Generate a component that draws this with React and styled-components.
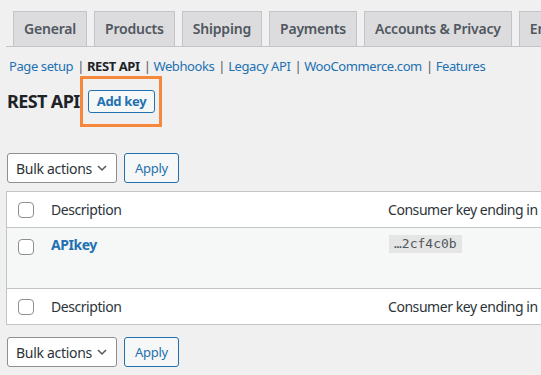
import React from 'react';
import styled, { createGlobalStyle } from 'styled-components';

const GlobalStyle = createGlobalStyle`
  html, body {
    margin: 0;
    padding: 0;
    overflow: hidden;
    background: #f0f0f1;
    font-family: "Noto Sans", "Open Sans", sans-serif;
    color: #3c434a;
  }
`;

const Page = styled.div`
  padding: 11px 0 0 6px;
  width: 760px;
`;

const TabBar = styled.nav`
  display: flex;
  border-bottom: 1px solid #c3c4c7;
  height: 35px;
`;

const Tab = styled.a`
  display: block;
  margin-left: 7px;
  padding: 5px 10px;
  height: 24px;
  line-height: 24px;
  font-size: 14px;
  font-weight: 600;
  color: #50575e;
  background: #dcdcde;
  border: 1px solid #c3c4c7;
  border-bottom: none;
  white-space: nowrap;
  letter-spacing: -0.2px;
`;

const SubNav = styled.ul`
  display: flex;
  list-style: none;
  margin: 11px 0 0 3px;
  padding: 0;
  font-size: 13px;
  line-height: 17px;
  letter-spacing: -0.4px;
`;

const SubItem = styled.li`
  white-space: nowrap;
  & + &::before {
    content: "|";
    color: #50575e;
    margin: 0 3px 0 4px;
  }
`;

const SubLink = styled.a`
  color: ${p => (p.$current ? '#1d2327' : '#2271b1')};
  font-weight: ${p => (p.$current ? 700 : 400)};
  text-decoration: none;
`;

const TitleRow = styled.div`
  display: flex;
  align-items: center;
  margin-top: 1px;
  height: 50px;
`;

const Title = styled.h2`
  margin: 0 0 0 1px;
  font-size: 18px;
  font-weight: 700;
  color: #1d2327;
  letter-spacing: -0.6px;
`;

const Highlight = styled.span`
  display: inline-flex;
  padding: 11px 4px 11px 5px;
  border: 3px solid #f6883c;
`;

const Button = styled.button`
  height: ${p => (p.$small ? '23px' : '30px')};
  padding: 0 ${p => (p.$small ? '8px' : '10px')};
  font-family: inherit;
  font-size: 13px;
  font-weight: ${p => (p.$small ? 700 : 400)};
  color: #2271b1;
  background: #f6f7f7;
  border: 1px solid #2271b1;
  border-radius: 3px;
  letter-spacing: -0.3px;
`;

const Toolbar = styled.div`
  display: flex;
  gap: 7px;
  margin: ${p => (p.$top ? '27px 0 8px 1px' : '12px 0 0 1px')};
`;

const Select = styled.div`
  display: flex;
  align-items: center;
  justify-content: space-between;
  box-sizing: border-box;
  width: 110px;
  height: 30px;
  padding: 0 8px;
  font-size: 14px;
  color: #2c3338;
  background: #fff;
  border: 1px solid #8c8f94;
  border-radius: 3px;
  letter-spacing: -0.3px;
`;

const Table = styled.div`
  width: 700px;
  border: 1px solid #c3c4c7;
  background: #fff;
`;

const Row = styled.div`
  display: grid;
  grid-template-columns: 44px 337px 1fr;
  height: ${p => (p.$tall ? '60px' : '35px')};
  background: ${p => (p.$alt ? '#f6f7f7' : '#fff')};
  border-top: ${p => (p.$line ? '1px solid #c3c4c7' : 'none')};
  font-size: 14px;
  letter-spacing: -0.45px;
`;

const Cell = styled.div`
  display: flex;
  align-items: ${p => (p.$top ? 'flex-start' : 'center')};
  padding-top: ${p => (p.$top ? '7px' : '0')};
  color: #2c3338;
  white-space: nowrap;
`;

const Check = styled.span`
  box-sizing: border-box;
  width: 16px;
  height: 16px;
  margin-left: 11px;
  margin-top: ${p => (p.$top ? '4px' : '0')};
  background: #fff;
  border: 1px solid #8c8f94;
  border-radius: 4px;
`;

const KeyLink = styled.a`
  color: #2271b1;
  font-weight: 700;
  font-size: 14px;
  line-height: 19px;
`;

const Code = styled.code`
  margin-left: 1px;
  padding: 1px 5px;
  font-family: "DejaVu Sans Mono", monospace;
  font-size: 13px;
  line-height: 16px;
  color: #50575e;
  background: #e5e5e5;
  letter-spacing: 0;
`;

const Chevron = () => (
  <svg width="12" height="12" viewBox="0 0 12 12">
    <path d="M2 4l4 4 4-4" fill="none" stroke="#50575e" strokeWidth="1.5" />
  </svg>
);

const tabs = ['General', 'Products', 'Shipping', 'Payments', 'Accounts & Privacy', 'Emails'];
const sections = ['Page setup', 'REST API', 'Webhooks', 'Legacy API', 'WooCommerce.com', 'Features'];

const Actions = ({ top }) => (
  <Toolbar $top={top}>
    <Select>Bulk actions <Chevron /></Select>
    <Button>Apply</Button>
  </Toolbar>
);

const HeadRow = ({ line }) => (
  <Row $line={line}>
    <Cell><Check /></Cell>
    <Cell>Description</Cell>
    <Cell>Consumer key ending in</Cell>
  </Row>
);

export default function App() {
  return (
    <Page>
      <GlobalStyle />
      <TabBar>
        {tabs.map(t => <Tab key={t}>{t}</Tab>)}
      </TabBar>
      <SubNav>
        {sections.map(s => (
          <SubItem key={s}>
            <SubLink $current={s === 'REST API'}>{s}</SubLink>
          </SubItem>
        ))}
      </SubNav>
      <TitleRow>
        <Title>REST API</Title>
        <Highlight><Button $small>Add key</Button></Highlight>
      </TitleRow>
      <Actions top />
      <Table>
        <HeadRow />
        <Row $tall $alt $line>
          <Cell $top><Check $top /></Cell>
          <Cell $top><KeyLink>APIkey</KeyLink></Cell>
          <Cell $top><Code>…2cf4c0b</Code></Cell>
        </Row>
        <HeadRow line />
      </Table>
      <Actions />
    </Page>
  );
}
